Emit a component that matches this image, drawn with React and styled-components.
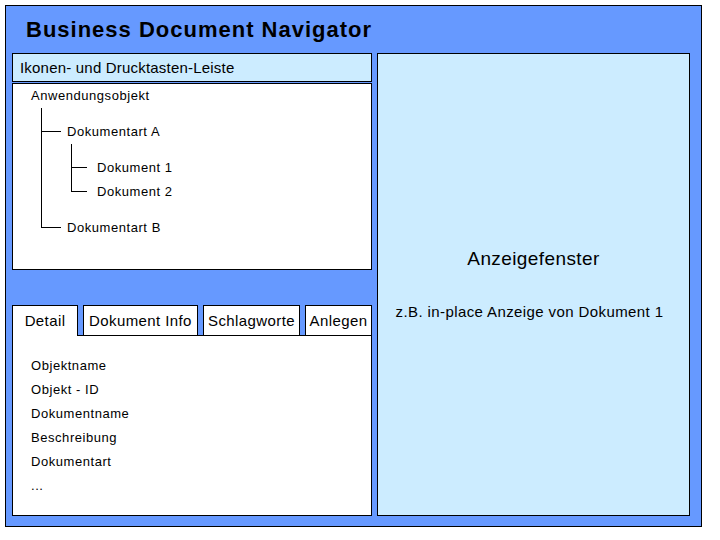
import React from 'react';
import styled, { createGlobalStyle } from 'styled-components';

const GlobalStyle = createGlobalStyle`
    body {
        margin: 0;
        font-family: "Liberation Sans", Arial, sans-serif;
        color: #000;
    }
`

const Page = styled.div`
    padding: 5px;
`

const Frame = styled.div`
    box-sizing: border-box;
    width: 697px;
    height: 522px;
    border: 1px solid #000;
    background-color: #6699ff;
    padding: 0 11px 10px 6px;
    display: grid;
    grid-template-rows: 47px 1fr;
`

const Title = styled.h1`
    margin: 0;
    padding-left: 14px;
    display: flex;
    align-items: center;
    font-size: 22px;
    font-weight: bold;
    letter-spacing: 1px;
`

const Body = styled.div`
    display: grid;
    grid-template-columns: 360px 313px;
    column-gap: 5px;
`

const LeftColumn = styled.div`
    display: flex;
    flex-direction: column;
`

const Toolbar = styled.div`
    box-sizing: border-box;
    height: 29px;
    border: 1px solid #000;
    background-color: #ccecff;
    padding-left: 7px;
    display: flex;
    align-items: center;
    font-size: 15px;
    letter-spacing: 0.2px;
`

const TreePanel = styled.div`
    box-sizing: border-box;
    height: 187px;
    margin-top: 1px;
    border: 1px solid #000;
    background-color: #fff;
    padding-left: 18px;
    font-size: 13px;
    letter-spacing: 0.55px;
`

const Label = styled.div`
    height: 24px;
    line-height: 24px;
    white-space: nowrap;
`

const TreeList = styled.ul`
    list-style: none;
    margin: 0 0 0 ${props => props.indent}px;
    padding: 12px 0;
    position: relative;

    &::before {
        content: '';
        position: absolute;
        left: 0;
        top: 0;
        bottom: 24px;
        border-left: 1px solid #000;
    }
`

const TreeItem = styled.li`
    position: relative;
    padding-left: 26px;

    &::before {
        content: '';
        position: absolute;
        left: 0;
        top: 11px;
        width: ${props => props.arm}px;
        border-top: 1px solid #000;
    }
`

const TabBox = styled.div`
    margin-top: auto;
    height: 211px;
    display: flex;
    flex-direction: column;
`

const TabRow = styled.div`
    display: flex;
    align-items: flex-start;
    column-gap: 5px;
    height: 30px;
`

const Tab = styled.div`
    box-sizing: border-box;
    width: ${props => props.width}px;
    height: ${props => props.active ? 31 : 30}px;
    border: 1px solid #000;
    border-bottom: none;
    background-color: #fff;
    display: flex;
    justify-content: center;
    padding-top: 6px;
    font-size: 15px;
    letter-spacing: 0.4px;
    white-space: nowrap;
    position: ${props => props.active ? 'relative' : 'static'};
    z-index: ${props => props.active ? 1 : 'auto'};
`

const DetailPanel = styled.div`
    box-sizing: border-box;
    flex: 1;
    border: 1px solid #000;
    background-color: #fff;
    padding: 18px 0 0 18px;
    font-size: 13px;
    letter-spacing: 0.55px;
`

const DisplayPanel = styled.div`
    box-sizing: border-box;
    border: 1px solid #000;
    background-color: #ccecff;
    display: flex;
    flex-direction: column;
    align-items: center;
    justify-content: center;
    row-gap: 31px;
`

const DisplayHeading = styled.div`
    font-size: 19px;
    line-height: 24px;
    letter-spacing: 0.4px;
`

const DisplayNote = styled.div`
    font-size: 15px;
    line-height: 20px;
    letter-spacing: 0.4px;
    margin-right: 8px;
`

const tabs = [
    { name: 'Detail', width: 66, active: true },
    { name: 'Dokument Info', width: 115 },
    { name: 'Schlagworte', width: 97 },
    { name: 'Anlegen', width: 67 },
]

const fields = ['Objektname', 'Objekt - ID', 'Dokumentname', 'Beschreibung', 'Dokumentart', '...']

export default function App() {
    return (
        <>
            <GlobalStyle />
            <Page>
                <Frame>
                    <Title>Business Document Navigator</Title>
                    <Body>
                        <LeftColumn>
                            <Toolbar>Ikonen- und Drucktasten-Leiste</Toolbar>
                            <TreePanel>
                                <Label>Anwendungsobjekt</Label>
                                <TreeList indent={10}>
                                    <TreeItem arm={20}>
                                        <Label>Dokumentart A</Label>
                                        <TreeList indent={4}>
                                            <TreeItem arm={16}><Label>Dokument 1</Label></TreeItem>
                                            <TreeItem arm={16}><Label>Dokument 2</Label></TreeItem>
                                        </TreeList>
                                    </TreeItem>
                                    <TreeItem arm={20}><Label>Dokumentart B</Label></TreeItem>
                                </TreeList>
                            </TreePanel>
                            <TabBox>
                                <TabRow>
                                    {tabs.map(tab => (
                                        <Tab key={tab.name} width={tab.width} active={tab.active}>{tab.name}</Tab>
                                    ))}
                                </TabRow>
                                <DetailPanel>
                                    {fields.map(field => <Label key={field}>{field}</Label>)}
                                </DetailPanel>
                            </TabBox>
                        </LeftColumn>
                        <DisplayPanel>
                            <DisplayHeading>Anzeigefenster</DisplayHeading>
                            <DisplayNote>z.B. in-place Anzeige von Dokument 1</DisplayNote>
                        </DisplayPanel>
                    </Body>
                </Frame>
            </Page>
        </>
    )
}
